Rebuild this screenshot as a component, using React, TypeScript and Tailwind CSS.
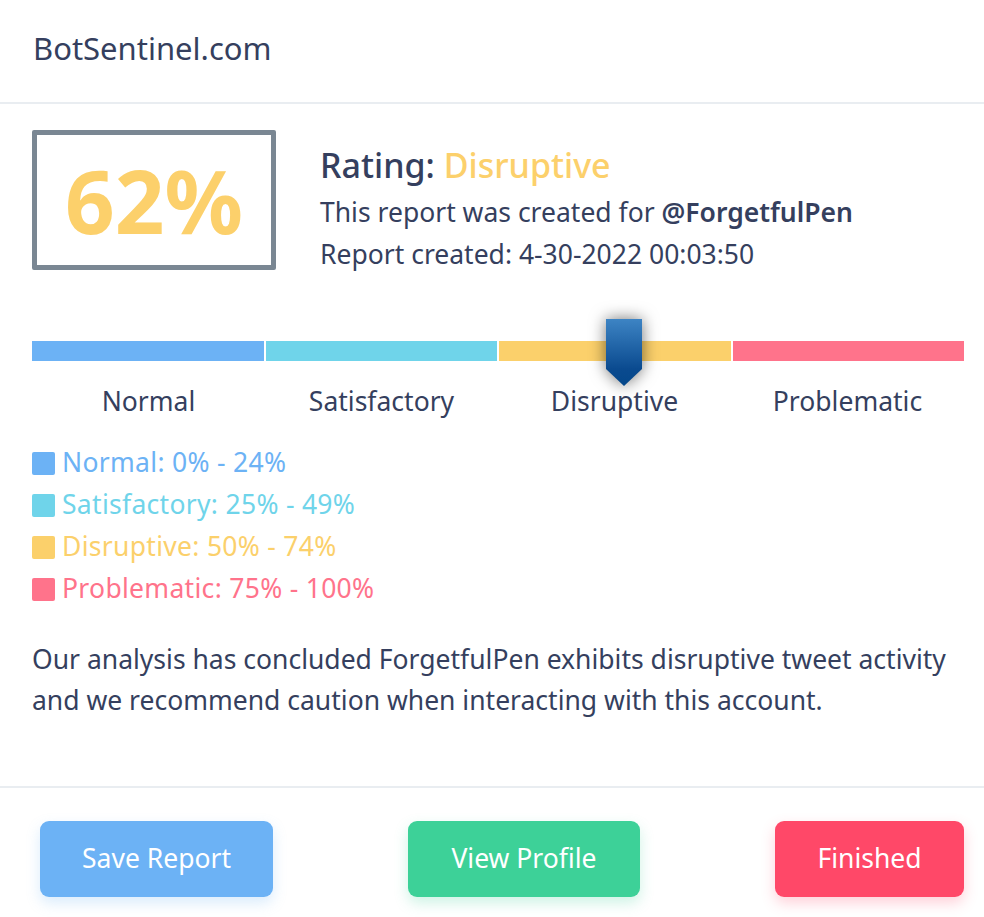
const segments = [
  { label: "Normal", color: "bg-[#6cb2f5]" },
  { label: "Satisfactory", color: "bg-[#6fd4ea]" },
  { label: "Disruptive", color: "bg-[#fbd06b]" },
  { label: "Problematic", color: "bg-[#ff738b]" },
];

const legend = [
  { text: "Normal: 0% - 24%", box: "bg-[#6cb2f5]", fg: "text-[#6cb2f5]" },
  { text: "Satisfactory: 25% - 49%", box: "bg-[#6fd4ea]", fg: "text-[#6fd4ea]" },
  { text: "Disruptive: 50% - 74%", box: "bg-[#fbd06b]", fg: "text-[#fbd06b]" },
  { text: "Problematic: 75% - 100%", box: "bg-[#ff738b]", fg: "text-[#ff738b]" },
];

const Marker = () => (
  <svg
    className="absolute left-[574px] -top-[22px] drop-shadow-[0_0_8px_rgba(0,0,0,0.55)]"
    width="36"
    height="67"
    viewBox="0 0 36 67"
  >
    <defs>
      <linearGradient id="mk" x1="0" y1="0" x2="0" y2="1">
        <stop offset="0" stopColor="#3d84c4" />
        <stop offset="0.75" stopColor="#0a4a8f" />
        <stop offset="1" stopColor="#04478a" />
      </linearGradient>
    </defs>
    <path d="M0 0 H36 V50 L18 67 L0 50 Z" fill="url(#mk)" />
  </svg>
);

export default function App() {
  return (
    <div className="w-[984px] h-[917px] bg-white text-[#353f5e] font-['Noto_Sans',sans-serif] overflow-hidden">
      <div className="h-[104px] border-b-2 border-[#e9edf1] px-[33px] pt-[27px]">
        <h1 className="text-[31px] leading-[42px]">BotSentinel.com</h1>
      </div>

      <div className="pl-[32px] pr-[20px] pt-[26px]">
        <div className="flex items-start">
          <div className="w-[244px] h-[140px] border-[5px] border-[#7a8793] rounded-[2px] flex items-center justify-center">
            <span className="text-[87px] font-bold text-[#fcd06b] leading-none">62%</span>
          </div>
          <div className="ml-[44px] pt-[12px]">
            <div className="text-[34px] leading-[46px] font-medium">
              Rating: <span className="text-[#fcd06b]">Disruptive</span>
            </div>
            <div className="text-[26.5px] leading-[41px] mt-[4px]">
              This report was created for <span className="font-semibold">@ForgetfulPen</span>
            </div>
            <div className="text-[26.5px] leading-[41px] mt-[1px]">Report created: 4-30-2022 00:03:50</div>
          </div>
        </div>

        <div className="mt-[66px] relative">
          <div className="flex gap-[2px] h-[20px]">
            {segments.map((s) => (
              <div key={s.label} className={`flex-1 ${s.color}`} />
            ))}
          </div>
          <Marker />
        </div>
        <div className="flex mt-[20px]">
          {segments.map((s) => (
            <div key={s.label} className="flex-1 text-center text-[26.5px] leading-[40px]">
              {s.label}
            </div>
          ))}
        </div>

        <div className="mt-[21px] flex flex-col">
          {legend.map((l) => (
            <div key={l.text} className="flex items-center h-[42px]">
              <div className={`w-[23px] h-[23px] rounded-[2px] ${l.box}`} />
              <span className={`ml-[7px] text-[26.5px] tracking-[0.3px] ${l.fg}`}>{l.text}</span>
            </div>
          ))}
        </div>

        <p className="mt-[29px] text-[26.5px] leading-[41px]">
          Our analysis has concluded ForgetfulPen exhibits disruptive tweet activity and we recommend caution when
          interacting with this account.
        </p>
      </div>

      <div className="mt-[65px] border-t-2 border-[#e9edf1] pl-[40px] pr-[20px] pt-[33px] flex justify-between">
        <button className="w-[233px] h-[76px] rounded-[9px] bg-[#6cb2f5] text-white text-[26.5px] shadow-[0_6px_14px_rgba(108,178,245,0.25)]">
          Save Report
        </button>
        <button className="w-[232px] h-[76px] rounded-[9px] bg-[#3dd198] text-white text-[26.5px] shadow-[0_6px_14px_rgba(61,209,152,0.25)]">
          View Profile
        </button>
        <button className="w-[189px] h-[76px] rounded-[9px] bg-[#ff4868] text-white text-[26.5px] shadow-[0_6px_14px_rgba(255,72,104,0.25)]">
          Finished
        </button>
      </div>
    </div>
  );
}
